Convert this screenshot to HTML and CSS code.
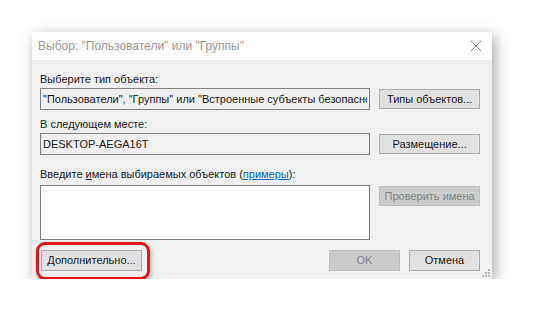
FILE: index.html
```html
<!DOCTYPE html>
<html lang="ru">
<head>
<meta charset="utf-8">
<link rel="stylesheet" href="styles.css">
</head>
<body>
<div class="dialog">
  <div class="titlebar">
    <span class="title">Выбор: "Пользователи" или "Группы"</span>
    <svg class="close" width="12" height="12" viewBox="0 0 12 12"><path d="M1 1L11 11M11 1L1 11" stroke="#8a8a8a" stroke-width="1" fill="none"/></svg>
  </div>
  <div class="content">
    <div class="label">Выберите тип объекта:</div>
    <div class="row">
      <div class="field ro"><span class="clip">"Пользователи", "Группы" или "Встроенные субъекты безопасно</span></div>
      <div class="btn">Типы объектов...</div>
    </div>
    <div class="label l2">В следующем месте:</div>
    <div class="row">
      <div class="field ro">DESKTOP-AEGA16T</div>
      <div class="btn">Размещение...</div>
    </div>
    <div class="label l3">Введите <u>и</u>мена выбираемых объектов (<a class="link">примеры</a>):</div>
    <div class="row top">
      <div class="field area"></div>
      <div class="btn disabled">Проверить имена</div>
    </div>
    <div class="bottom">
      <div class="btn wide">Дополнительно...</div>
      <div class="spacer"></div>
      <div class="btn small disabled">OK</div>
      <div class="btn small">Отмена</div>
    </div>
  </div>
  <div class="highlight"></div>
  <svg class="grip" width="8" height="8" viewBox="0 0 8 8"><g fill="#b8b8b8"><rect x="6" y="0" width="2" height="2"/><rect x="3" y="3" width="2" height="2"/><rect x="6" y="3" width="2" height="2"/><rect x="0" y="6" width="2" height="2"/><rect x="3" y="6" width="2" height="2"/><rect x="6" y="6" width="2" height="2"/></g></svg>
</div>
</body>
</html>
```
FILE: styles.css
```css
html, body {
  margin: 0;
  padding: 0;
  background: #ffffff;
}
body {
  font-family: "Liberation Sans", Arial, sans-serif;
  font-size: 11px;
  color: #1a1a1a;
  padding: 32px 0 0 32px;
}
.dialog {
  position: relative;
  width: 460px;
  height: 247px;
  background: #f0f0f0;
  box-shadow: 3px 4px 14px rgba(0, 0, 0, 0.35);
  box-sizing: border-box;
}
.titlebar {
  height: 28px;
  background: #ffffff;
  display: flex;
  align-items: center;
  padding: 0 8px 0 6px;
}
.title {
  color: #999999;
  font-size: 12px;
  flex: 1;
  white-space: nowrap;
}
.close {
  margin-right: 2px;
}
.content {
  padding: 12px 12px 8px 8px;
}
.label {
  height: 14px;
  line-height: 14px;
  white-space: nowrap;
  margin-bottom: 2px;
}
.l2 {
  margin-top: 7px;
}
.l3 {
  margin-top: 12px;
  margin-bottom: 4px;
}
.link {
  color: #0066cc;
  text-decoration: underline;
}
.row {
  display: flex;
  align-items: center;
  gap: 9px;
  height: 22px;
}
.row.top {
  align-items: flex-start;
  height: 55px;
}
.field {
  width: 331px;
  height: 22px;
  box-sizing: border-box;
  border: 1px solid #828282;
  padding: 0 2px;
  line-height: 20px;
  white-space: nowrap;
  overflow: hidden;
}
.clip {
  display: block;
  overflow: hidden;
}
.ro {
  background: #f0f0f0;
}
.area {
  height: 55px;
  background: #ffffff;
}
.btn {
  width: 101px;
  height: 20px;
  box-sizing: border-box;
  border: 1px solid #adadad;
  background: #e1e1e1;
  text-align: center;
  line-height: 18px;
  white-space: nowrap;
}
.row.top .btn {
  margin-top: 1px;
}
.btn.disabled {
  background: #cccccc;
  border-color: #bfbfbf;
  color: #838383;
}
.bottom {
  display: flex;
  margin-top: 10px;
  gap: 9px;
  padding-left: 1px;
}
.bottom .btn {
  height: 21px;
  line-height: 19px;
}
.spacer {
  flex: 1;
}
.btn.small {
  width: 71px;
}
.highlight {
  position: absolute;
  left: 4px;
  top: 210px;
  width: 114px;
  height: 38px;
  box-sizing: border-box;
  border: 3px solid #e3151f;
  border-radius: 9px;
  box-shadow: 1px 2px 4px rgba(0, 0, 0, 0.3);
}
.grip {
  position: absolute;
  right: 2px;
  bottom: 2px;
}
```
